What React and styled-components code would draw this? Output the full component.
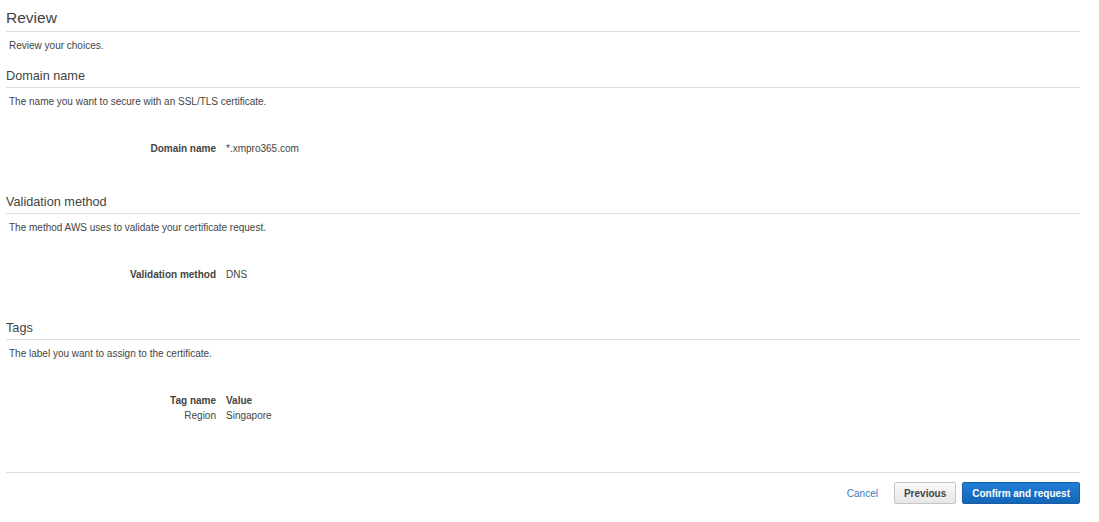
import React from "react";
import styled, { createGlobalStyle } from "styled-components";

const Global = createGlobalStyle`
  html, body { margin: 0; padding: 0; background: #fff; }
  body { font-family: "Liberation Sans", Arial, sans-serif; color: #444; }
`;

const Page = styled.div`
  padding: 8px 19px 0 6px;
`;

const Title = styled.h1`
  margin: 0;
  font-size: 15.5px;
  line-height: 20px;
  font-weight: normal;
  color: #444;
  padding-bottom: 3px;
  border-bottom: 1px solid #dedede;
`;

const Heading = styled.h2`
  margin: ${(p) => (p.$first ? "14px" : "37px")} 0 0;
  font-size: 12.7px;
  line-height: 19px;
  padding-bottom: 1px;
  font-weight: normal;
  color: #444;
  border-bottom: 1px solid #dedede;
`;

const Desc = styled.p`
  margin: 7px 0 0;
  padding-left: 3px;
  font-size: 10px;
  line-height: 14px;
  color: #444;
`;

const KV = styled.div`
  margin-top: 32px;
  display: grid;
  grid-template-columns: 210px auto;
  column-gap: 10px;
  justify-content: start;
  font-size: 10px;
  line-height: 15px;
`;

const Key = styled.div`
  text-align: right;
  font-weight: ${(p) => (p.$plain ? "normal" : "bold")};
  color: #444;
`;

const Val = styled.div`
  font-weight: ${(p) => (p.$bold ? "bold" : "normal")};
  color: #444;
`;

const Footer = styled.div`
  margin-top: 49px;
  border-top: 1px solid #dedede;
  padding-top: 9px;
  display: flex;
  justify-content: flex-end;
  align-items: center;
`;

const Cancel = styled.a`
  font-size: 10px;
  color: #3a78c3;
  text-decoration: none;
  margin-right: 16px;
  cursor: pointer;
`;

const Button = styled.button`
  height: 22px;
  padding: 0 9px;
  font-family: "Liberation Sans", Arial, sans-serif;
  font-size: 10px;
  font-weight: bold;
  border-radius: 2px;
  cursor: pointer;
  margin-left: ${(p) => (p.$primary ? "6px" : "0")};
  color: ${(p) => (p.$primary ? "#fff" : "#444")};
  border: 1px solid ${(p) => (p.$primary ? "#1a5ea5" : "#c6c6c6")};
  background: ${(p) =>
    p.$primary
      ? "linear-gradient(#1f7fd8, #1465b6)"
      : "linear-gradient(#f9f9f9, #e6e6e6)"};
`;

export default function App() {
  return (
    <>
      <Global />
      <Page>
        <Title>Review</Title>
        <Desc>Review your choices.</Desc>

        <Heading $first>Domain name</Heading>
        <Desc>The name you want to secure with an SSL/TLS certificate.</Desc>
        <KV>
          <Key>Domain name</Key>
          <Val>*.xmpro365.com</Val>
        </KV>

        <Heading>Validation method</Heading>
        <Desc>The method AWS uses to validate your certificate request.</Desc>
        <KV>
          <Key>Validation method</Key>
          <Val>DNS</Val>
        </KV>

        <Heading>Tags</Heading>
        <Desc>The label you want to assign to the certificate.</Desc>
        <KV>
          <Key>Tag name</Key>
          <Val $bold>Value</Val>
          <Key $plain>Region</Key>
          <Val>Singapore</Val>
        </KV>

        <Footer>
          <Cancel>Cancel</Cancel>
          <Button>Previous</Button>
          <Button $primary>Confirm and request</Button>
        </Footer>
      </Page>
    </>
  );
}
